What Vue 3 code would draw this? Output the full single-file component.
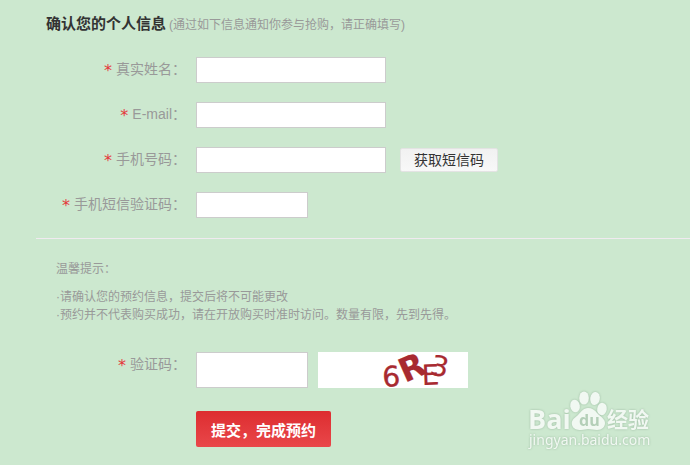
<script setup>
import { ref } from 'vue'

const form = ref({ name: '', email: '', phone: '', sms: '', captcha: '' })
</script>

<template>
  <main class="page">
    <form @submit.prevent>
      <header class="heading">
        <h1>确认您的个人信息</h1>
        <span>(通过如下信息通知你参与抢购，请正确填写)</span>
      </header>

      <div class="fields">
        <div class="row">
          <label for="name"><i>*</i>真实姓名：</label>
          <input id="name" v-model="form.name" type="text" />
        </div>
        <div class="row">
          <label for="email"><i>*</i>E-mail：</label>
          <input id="email" v-model="form.email" type="email" />
        </div>
        <div class="row">
          <label for="phone"><i>*</i>手机号码：</label>
          <input id="phone" v-model="form.phone" type="tel" />
          <button type="button" class="get-code">获取短信码</button>
        </div>
        <div class="row">
          <label for="sms"><i>*</i>手机短信验证码：</label>
          <input id="sms" v-model="form.sms" class="short" type="text" />
        </div>
      </div>

      <section class="tips">
        <h2>温馨提示：</h2>
        <p>·请确认您的预约信息，提交后将不可能更改</p>
        <p>·预约并不代表购买成功，请在开放购买时准时访问。数量有限，先到先得。</p>
      </section>

      <div class="row captcha-row">
        <label for="captcha"><i>*</i>验证码：</label>
        <input id="captcha" v-model="form.captcha" class="short tall" type="text" />
        <svg class="captcha" viewBox="0 0 150 36" role="img" aria-label="验证码">
          <g fill="#a82a30" stroke="#a82a30">
            <text transform="translate(65 35) rotate(-4)" font-size="28" stroke-width="0.4">6</text>
            <text transform="translate(87 31) rotate(-24)" font-size="33" font-weight="700" stroke-width="0.2">R</text>
            <text transform="translate(104 33) rotate(-2)" font-size="28" stroke-width="0.1">E</text>
            <text transform="translate(111 22) rotate(12)" font-size="28" stroke-width="0.2">3</text>
          </g>
        </svg>
      </div>

      <div class="actions">
        <button type="submit" class="submit">提交，完成预约</button>
      </div>
    </form>

    <svg class="watermark" viewBox="0 0 126 62" role="img" aria-label="Baidu 经验">
      <g fill="#f1f8f2">
        <text class="bai" x="1" y="39">Bai</text>
        <ellipse cx="48" cy="16" rx="4.8" ry="6.4" transform="rotate(-10 48 16)" />
        <ellipse cx="57" cy="8" rx="4.8" ry="6.6" />
        <ellipse cx="68" cy="8.5" rx="4.8" ry="6.6" transform="rotate(8 68 8.5)" />
        <ellipse cx="75" cy="19" rx="4.8" ry="6.2" transform="rotate(10 75 19)" />
        <path d="M61 18C56 18 54 22 51 25C46 29 44 31 45 35C46 39 50 40 54 40C57 40 59 39 61 39C64 39 67 40 70 40C75 40 78 37 78 33C78 29 74 27 70 23C68 20 65 18 61 18Z" />
        <text class="jy" x="80" y="37">经验</text>
        <text class="url" x="2" y="55">jingyan.baidu.com</text>
      </g>
      <text class="du" x="52" y="36">du</text>
    </svg>
  </main>
</template>

<style>
body {
  background: #cce8cf;
}
</style>

<style scoped>
.page {
  position: relative;
  box-sizing: border-box;
  min-height: 100vh;
  padding: 14px 0 18px 36px;
  font-family: "Liberation Sans", "Noto Sans CJK SC", sans-serif;
  font-size: 14px;
  color: #999;
}

.heading {
  display: flex;
  align-items: baseline;
  gap: 3px;
  height: 20px;
  padding-left: 10px;
  line-height: 20px;
  font-size: 12px;
}

h1 {
  margin: 0;
  font-size: 15px;
  color: #333;
}

.fields {
  display: grid;
  gap: 19px;
  padding: 23px 0 20px;
  border-bottom: 1px solid #f0eaf0;
}

.row {
  display: flex;
}

label {
  width: 150px;
  margin-right: 10px;
  line-height: 24px;
  text-align: right;
  white-space: nowrap;
}

label i {
  margin-right: 4px;
  font: 16px/16px "DejaVu Sans", sans-serif;
  vertical-align: -2px;
  color: #e4393c;
}

input {
  box-sizing: border-box;
  width: 190px;
  height: 26px;
  padding: 0 6px;
  border: 1px solid #ccc;
  background: #fff;
  font: inherit;
  color: #333;
}

.short {
  width: 112px;
}

.tall {
  height: 36px;
}

button {
  padding: 0;
  font-family: inherit;
  cursor: pointer;
}

.get-code {
  width: 98px;
  margin: 1px 0 1px 14px;
  border: 1px solid #e3e3e3;
  border-radius: 2px;
  background: linear-gradient(#f1f1f1, #f8f8f8);
  font-size: 14px;
  line-height: 22px;
  color: #333;
}

.tips {
  padding: 21px 0 0 20px;
  font-size: 12px;
  line-height: 18px;
}

.tips h2 {
  margin: 0 0 10px;
  font-size: 12px;
  font-weight: 400;
}

.tips p {
  margin: 0;
}

.captcha-row {
  margin-top: 28px;
}

.captcha {
  width: 150px;
  height: 36px;
  margin-left: 10px;
  background: #fff;
  font-family: "DejaVu Sans", sans-serif;
}

.actions {
  margin-top: 23px;
  padding-left: 160px;
}

.submit {
  width: 135px;
  height: 36px;
  border: 0;
  border-radius: 2px;
  background: linear-gradient(#dd2d30, #e9474a);
  font-size: 15px;
  font-weight: 700;
  color: #fff;
}

.watermark {
  position: absolute;
  right: 37px;
  bottom: 13px;
  width: 126px;
  height: 62px;
  filter: drop-shadow(0 0 1px #9dbba2);
}

.bai {
  font: 700 27px "Open Sans", sans-serif;
}

.du {
  font: 700 16px "Open Sans", sans-serif;
  fill: #b4cfb8;
}

.jy {
  font: 700 21px "Noto Sans CJK SC", sans-serif;
}

.url {
  font: 14px "Noto Sans", sans-serif;
}
</style>
